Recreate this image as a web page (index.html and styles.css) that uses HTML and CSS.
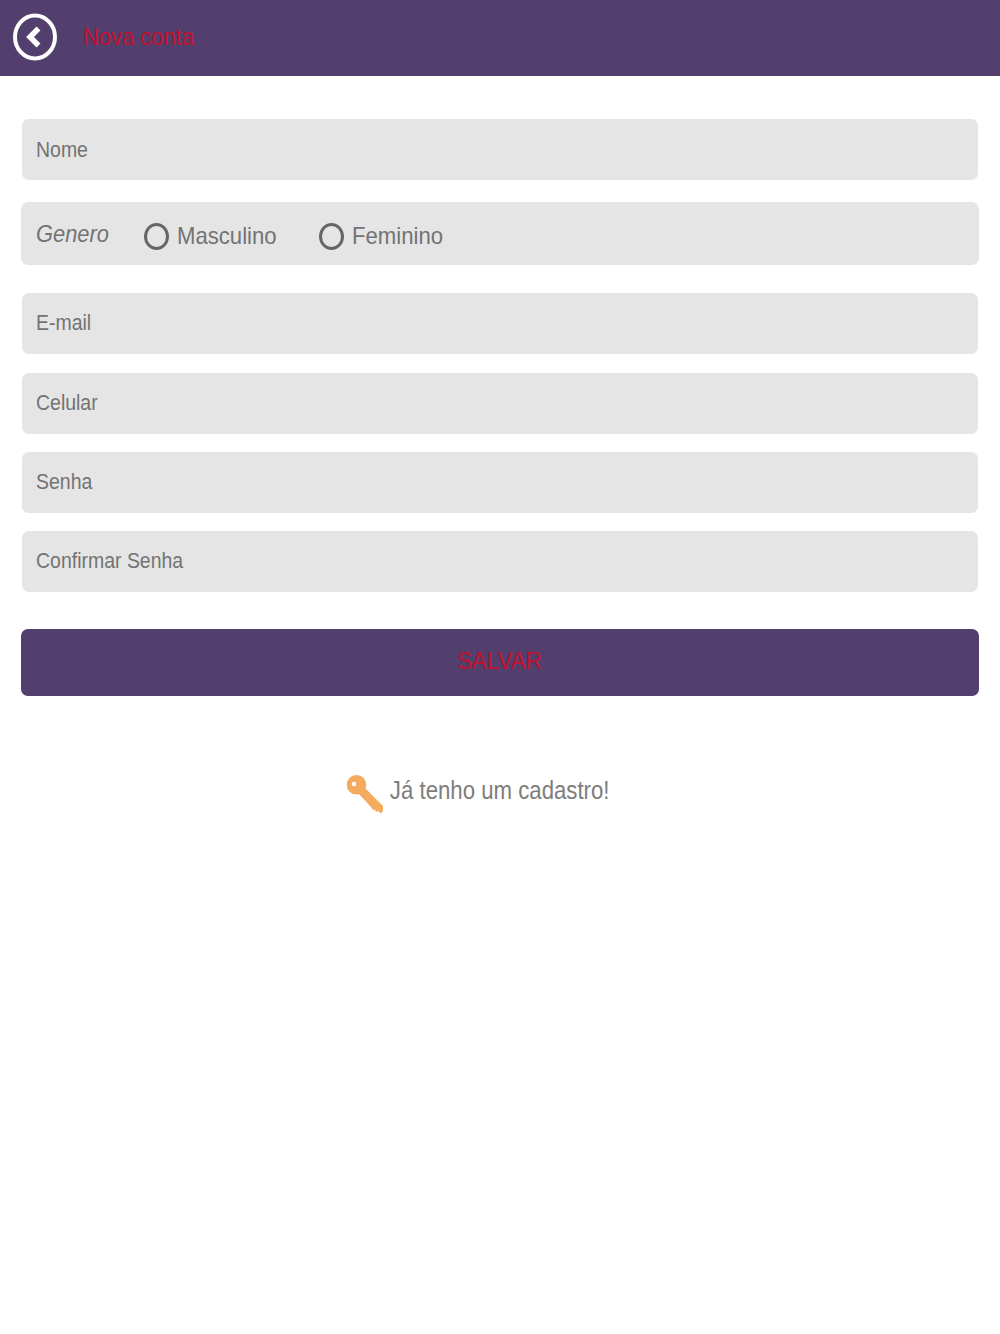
FILE: index.html
```html
<!DOCTYPE html>
<html lang="pt">
<head>
    <meta charset="UTF-8">
    <title>Nova conta</title>
    <link rel="stylesheet" href="styles.css">
</head>
<body>
    <header class="top-bar">
        <svg class="back-icon" width="44" height="48" viewBox="0 0 44 48">
            <ellipse cx="22" cy="24" rx="20" ry="21.500" fill="none" stroke="#fff" stroke-width="4"/>
            <path d="M25.500 15.500 L17 24 L25.500 32.500" fill="none" stroke="#fff" stroke-width="5.500"/>
        </svg>
        <span class="top-title">Nova conta</span>
    </header>

    <form class="user-form">
        <div class="field field-first"><span class="field-text">Nome</span></div>
        <div class="gender-row">
            <span class="gender-label"><span class="gender-text">Genero</span></span>
            <span class="radio-option radio-male"><i class="radio-dot"></i><span class="radio-text">Masculino</span></span>
            <span class="radio-option"><i class="radio-dot"></i><span class="radio-text">Feminino</span></span>
        </div>
        <div class="field field-email"><span class="field-text">E-mail</span></div>
        <div class="field"><span class="field-text">Celular</span></div>
        <div class="field"><span class="field-text">Senha</span></div>
        <div class="field"><span class="field-text">Confirmar Senha</span></div>
        <div class="save-button"><span class="save-text">SALVAR</span></div>
    </form>

    <div class="login-link">
        <svg class="key-icon" width="38" height="40" viewBox="0 0 38 40">
            <path d="M10.500 1 A9.800 9.800 0 1 1 10.500 20.600 A9.800 9.800 0 1 1 10.500 1 Z M8 7.800 A2.200 2.200 0 1 0 8 12.200 A2.200 2.200 0 1 0 8 7.800 Z" fill="#f5ab5e" fill-rule="evenodd"/>
            <path d="M16 11 L37 32 L37 37 L35 39.500 L32 37 L30.500 38 L28.500 35.500 L27 36 L25 33 L12 19 Z" fill="#f5ab5e"/>
        </svg>
        <span class="login-text">Já tenho um cadastro!</span>
    </div>
</body>
</html>
```

FILE: styles.css
```css
body {
    margin: 0;
    background-color: #fff;
    font-family: "Liberation Sans", Arial, sans-serif;
    color: #737373;
}

/* the text in this screen is a little narrower than the font, so it gets squeezed */
.top-title,
.field-text,
.gender-text,
.radio-text {
    display: inline-block;
    transform-origin: left center;
}

.save-text,
.login-text {
    display: inline-block;
}

.top-bar {
    display: flex;
    align-items: center;
    height: 76px;
    padding-left: 13px;
    background-color: #533f6d;
    box-sizing: border-box;
}

.back-icon {
    margin-right: 26px;
    margin-bottom: 3px;
}

.top-title {
    margin-bottom: 2px;
    font-size: 24px;
    color: #c1112c;
    transform: scaleX(0.917);
}

.user-form {
    display: flex;
    flex-direction: column;
    padding: 0 21px;
}

.field {
    display: flex;
    align-items: center;
    height: 61px;
    margin: 18px 1px 0;
    padding-left: 14px;
    padding-bottom: 2px;
    box-sizing: border-box;
    background-color: #e5e5e5;
    border-radius: 7px;
    font-size: 22px;
}

.field-text {
    transform: scaleX(0.885);
}

.field-first {
    margin-top: 43px;
    padding-bottom: 0;
}

.field-email {
    margin-top: 28px;
    margin-bottom: 1px;
}

.gender-row {
    display: flex;
    align-items: center;
    height: 63px;
    margin-top: 22px;
    padding-left: 15px;
    background-color: #e5e5e5;
    border-radius: 7px;
    font-size: 24px;
}

.gender-label {
    width: 108px;
    font-style: italic;
}

.gender-text {
    transform: scaleX(0.91);
}

.radio-option {
    display: flex;
    align-items: center;
    margin-top: 5px;
}

.radio-male {
    width: 175px;
}

.radio-text {
    transform: scaleX(0.922);
}

.radio-dot {
    width: 19px;
    height: 21px;
    margin-right: 8px;
    border: 3px solid #666;
    border-radius: 50%;
}

.save-button {
    display: flex;
    align-items: center;
    justify-content: center;
    height: 67px;
    margin-top: 37px;
    padding-bottom: 3px;
    box-sizing: border-box;
    background-color: #533f6d;
    border-radius: 7px;
    font-size: 24px;
    color: #c1112c;
}

.save-text {
    transform: scaleX(0.93);
}

.login-link {
    display: flex;
    align-items: center;
    justify-content: center;
    margin-top: 78px;
    font-size: 25px;
    color: #7d7d7d;
}

.login-text {
    margin-bottom: 8px;
    transform: scaleX(0.888);
}

/* key hangs off the left of the centred text without moving it */
.key-icon {
    margin-left: -30px;
    margin-right: -8px;
}
```
